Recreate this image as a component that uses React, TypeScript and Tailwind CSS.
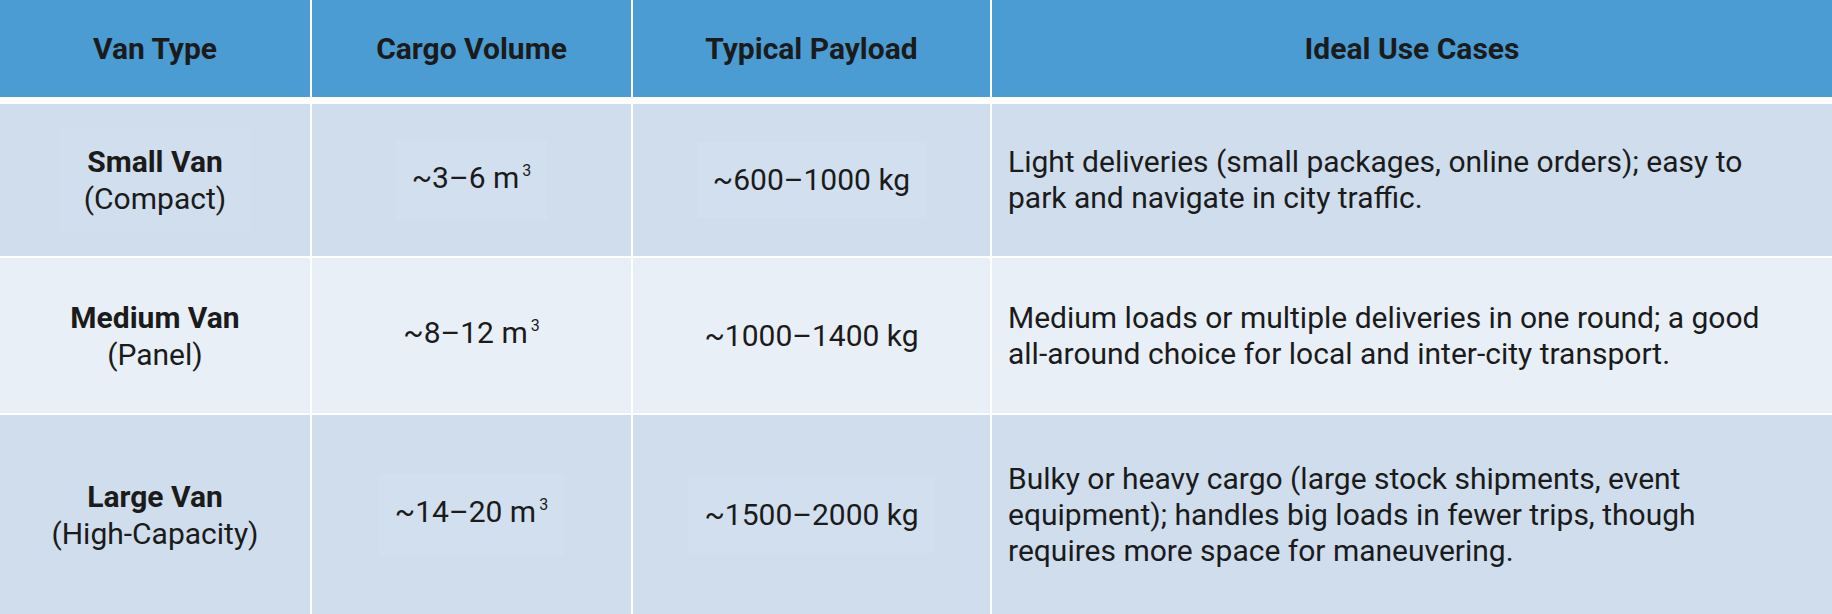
const rows = [
  {
    name: 'Small Van',
    sub: '(Compact)',
    volume: '~3–6 m',
    payload: '~600–1000 kg',
    uses: ['Light deliveries (small packages, online orders); easy to', 'park and navigate in city traffic.'],
    bg: 'bg-[#cfdded]',
    nameBox: 'bg-[#d1deed]',
    box: 'bg-[#d1dfee]',
    h: 'h-[152px]',
  },
  {
    name: 'Medium Van',
    sub: '(Panel)',
    volume: '~8–12 m',
    payload: '~1000–1400 kg',
    uses: ['Medium loads or multiple deliveries in one round; a good', 'all-around choice for local and inter-city transport.'],
    bg: 'bg-[#e8eff7]',
    nameBox: 'bg-[#e8eff7]',
    box: 'bg-[#e8eff7]',
    h: 'h-[155px]',
  },
  {
    name: 'Large Van',
    sub: '(High-Capacity)',
    volume: '~14–20 m',
    payload: '~1500–2000 kg',
    uses: [
      'Bulky or heavy cargo (large stock shipments, event',
      'equipment); handles big loads in fewer trips, though',
      'requires more space for maneuvering.',
    ],
    bg: 'bg-[#cfdded]',
    nameBox: 'bg-[#cfdded]',
    box: 'bg-[#d1dfee]',
    h: 'h-[199px]',
  },
];

const headers = ['Van Type', 'Cargo Volume', 'Typical Payload', 'Ideal Use Cases'];

export default function App() {
  return (
    <div className="w-[1832px] h-[614px] overflow-hidden bg-white text-[#1b1b1b] font-['Roboto',sans-serif]">
      {/* header */}
      <div className="grid grid-cols-[310px_319px_357px_840px] gap-x-[2px] h-[97px] mb-[7px]">
        {headers.map((h) => (
          <div key={h} className="bg-[#4a9cd3] flex items-center justify-center text-[30px] font-bold">
            {h}
          </div>
        ))}
      </div>

      {/* body */}
      <div className="flex flex-col gap-y-[2px]">
        {rows.map((r) => (
          <div key={r.name} className={`grid grid-cols-[310px_319px_357px_840px] gap-x-[2px] ${r.h}`}>
            <div className={`${r.bg} flex items-center justify-center`}>
              <div className={`${r.nameBox} px-6 py-4 text-center text-[30px] leading-[37px]`}>
                <div className="font-bold">{r.name}</div>
                <div>{r.sub}</div>
              </div>
            </div>
            <div className={`${r.bg} flex items-center justify-center`}>
              <div className={`${r.box} px-4 py-5 text-[30px] leading-[36px]`}>
                {r.volume}
                <span className="relative -top-[12px] ml-[3px] text-[16px]">3</span>
              </div>
            </div>
            <div className={`${r.bg} flex items-center justify-center`}>
              <div className={`${r.box} px-4 py-5 text-[30px] leading-[36px]`}>{r.payload}</div>
            </div>
            <div className={`${r.bg} flex items-center pl-4 pr-6`}>
              <p className="text-[30px] leading-[36px] whitespace-nowrap">
                {r.uses.map((line) => (
                  <span key={line} className="block">
                    {line}
                  </span>
                ))}
              </p>
            </div>
          </div>
        ))}
      </div>
    </div>
  );
}
